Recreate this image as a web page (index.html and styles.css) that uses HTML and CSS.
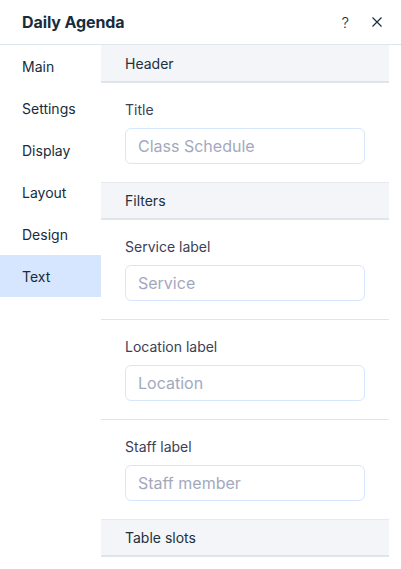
FILE: index.html
```html
<!DOCTYPE html>
<html>
<head>
<meta charset="utf-8">
<link rel="stylesheet" href="styles.css">
</head>
<body>
<div class="panel">
  <div class="topbar">
    <div class="title">Daily Agenda</div>
    <div class="actions">
      <span class="help">?</span>
      <svg class="close" width="12" height="12" viewBox="0 0 12 12"><path d="M1.5 1.5L10.5 10.5M10.5 1.5L1.5 10.5" stroke="#162d3d" stroke-width="1.2" fill="none"/></svg>
    </div>
  </div>
  <div class="body">
    <nav class="side">
      <div class="nav-item">Main</div>
      <div class="nav-item">Settings</div>
      <div class="nav-item">Display</div>
      <div class="nav-item">Layout</div>
      <div class="nav-item">Design</div>
      <div class="nav-item active">Text</div>
    </nav>
    <main class="content">
      <div class="section-head first">Header</div>
      <div class="field">
        <div class="label">Title</div>
        <div class="input">Class Schedule</div>
      </div>
      <div class="section-head">Filters</div>
      <div class="field">
        <div class="label">Service label</div>
        <div class="input">Service</div>
      </div>
      <div class="field divided">
        <div class="label">Location label</div>
        <div class="input">Location</div>
      </div>
      <div class="field divided">
        <div class="label">Staff label</div>
        <div class="input">Staff member</div>
      </div>
      <div class="section-head">Table slots</div>
    </main>
  </div>
</div>
</body>
</html>
```
FILE: styles.css
```css
* { box-sizing: border-box; }
html, body { margin: 0; padding: 0; background: #fff; }
body {
  font-family: "Inter", "Noto Sans", sans-serif;
  color: #162d3d;
  width: 401px;
  height: 569px;
  overflow: hidden;
}
.panel { display: flex; flex-direction: column; height: 569px; }
.topbar {
  height: 45px;
  border-bottom: 1px solid #dfe5eb;
  display: flex;
  align-items: center;
  justify-content: space-between;
  padding: 0 18px 0 22px;
  flex-shrink: 0;
}
.title { font-size: 16px; font-weight: 700; letter-spacing: -0.1px; color: #162d3d; padding-top: 0; }
.actions { display: flex; align-items: center; gap: 22px; }
.help { font-size: 15px; color: #162d3d; font-weight: 300; }
.close { display: block; }
.body { display: flex; flex: 1; min-height: 0; }
.side { width: 101px; flex-shrink: 0; padding-top: 0; }
.nav-item {
  height: 42px;
  display: flex;
  align-items: center;
  padding-left: 22px;
  font-size: 14px;
  color: #162d3d;
}
.active { background: #d6e6fe; }
.content { width: 288px; flex-shrink: 0; }
.section-head {
  height: 38px;
  background: #f4f5f8;
  border-top: 1px solid #e6eaef;
  border-bottom: 2px solid #dfe5eb;
  display: flex;
  align-items: center;
  padding-left: 24px;
  font-size: 14px;
  color: #20303c;
}
.section-head.first { border-top: 0; height: 38px; }
.field { padding: 17px 24px 18px 24px; }
.field.divided { border-top: 1px solid #dfe5eb; }
.label { font-size: 14px; line-height: 20px; color: #3b4057; margin-bottom: 8px; }
.input {
  height: 36px;
  border: 1px solid #d6e6fe;
  border-radius: 6px;
  display: flex;
  align-items: center;
  padding-left: 12px;
  font-size: 16px;
  color: #a3a9bd;
  width: 240px;
}
```
